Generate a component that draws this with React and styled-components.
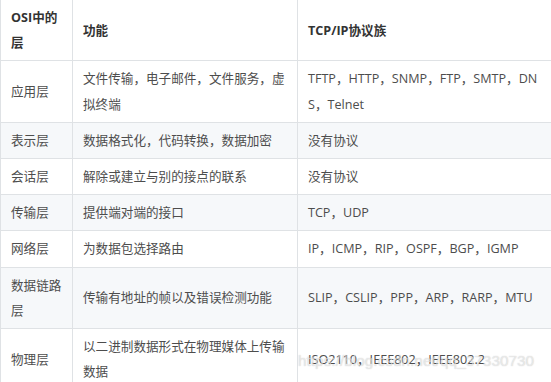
import React from 'react';
import styled, { createGlobalStyle } from 'styled-components';

const GlobalStyle = createGlobalStyle`
  html, body {
    margin: 0;
    padding: 0;
    background: #fff;
    overflow: hidden;
  }
`;

const Page = styled.div`
  position: relative;
  width: 551px;
  height: 382px;
  overflow: hidden;
  font-family: "Open Sans", "Noto Sans CJK SC", sans-serif;
  font-size: 12.6px;
  line-height: 25.2px;
  color: #4d4d4d;
`;

const Table = styled.table`
  width: 553px;
  margin-top: -1px;
  border-collapse: collapse;
  table-layout: fixed;
`;

const Col = styled.col`
  width: ${(p) => p.$w}px;
`;

const Row = styled.tr`
  background: ${(p) => (p.$shaded ? '#f6f8fa' : '#fff')};
`;

const Head = styled.th`
  padding: 5px 10px;
  border: 1px solid #dfe2e5;
  text-align: left;
  vertical-align: middle;
  font-weight: bold;
  color: #333;
  word-break: break-all;
`;

const Cell = styled.td`
  padding: 5px 10px;
  border: 1px solid #dfe2e5;
  vertical-align: middle;
  word-break: break-all;
`;

const Watermark = styled.div`
  position: absolute;
  left: 298px;
  top: 351px;
  font-family: "Liberation Sans", Arial, sans-serif;
  font-size: 15.4px;
  line-height: 20px;
  color: rgba(255, 255, 255, 0.55);
  text-shadow: 0 0 1px rgba(120, 120, 120, 0.45);
  pointer-events: none;
  white-space: nowrap;
`;

const rows = [
  ['应用层', '文件传输，电子邮件，文件服务，虚拟终端', 'TFTP，HTTP，SNMP，FTP，SMTP，DNS，Telnet'],
  ['表示层', '数据格式化，代码转换，数据加密', '没有协议'],
  ['会话层', '解除或建立与别的接点的联系', '没有协议'],
  ['传输层', '提供端对端的接口', 'TCP，UDP'],
  ['网络层', '为数据包选择路由', 'IP，ICMP，RIP，OSPF，BGP，IGMP'],
  ['数据链路层', '传输有地址的帧以及错误检测功能', 'SLIP，CSLIP，PPP，ARP，RARP，MTU'],
  ['物理层', '以二进制数据形式在物理媒体上传输数据', 'ISO2110，IEEE802，IEEE802.2'],
];

export default function App() {
  return (
    <Page>
      <GlobalStyle />
      <Table>
        <colgroup>
          <Col $w={72} />
          <Col $w={225} />
          <Col $w={256} />
        </colgroup>
        <thead>
          <Row>
            <Head>OSI中的层</Head>
            <Head>功能</Head>
            <Head>TCP/IP协议族</Head>
          </Row>
        </thead>
        <tbody>
          {rows.map((r, i) => (
            <Row key={r[0]} $shaded={i % 2 === 1}>
              <Cell>{r[0]}</Cell>
              <Cell>{r[1]}</Cell>
              <Cell>{r[2]}</Cell>
            </Row>
          ))}
        </tbody>
      </Table>
      <Watermark>https://blog.csdn.net/qq_37330730</Watermark>
    </Page>
  );
}
